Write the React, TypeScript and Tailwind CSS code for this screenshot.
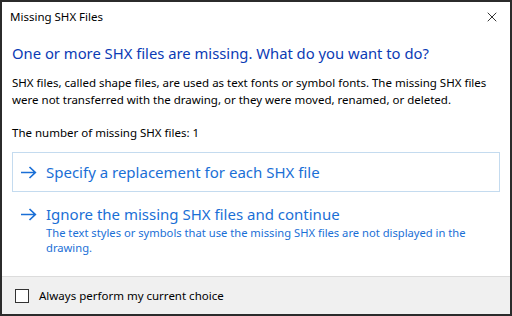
import { X } from "lucide-react";

const font = { fontFamily: '"Noto Sans", "Open Sans", sans-serif' };

function Arrow() {
  return (
    <svg width="17" height="13" viewBox="0 0 17 13" className="shrink-0">
      <path d="M1 6.5h14.5M9.5 1l5.8 5.5-5.8 5.5" fill="none" stroke="#1a6fd6" strokeWidth="1.7" />
    </svg>
  );
}

export default function App() {
  return (
    <div
      className="flex h-[316px] w-[512px] flex-col border-2 border-[#2b2b2b] bg-white text-[11.5px] text-black"
      style={font}
    >
      <div className="flex h-[30px] items-center justify-between pl-[8px] pr-[10px]">
        <span className="text-[11.5px] text-black">Missing SHX Files</span>
        <X size={16} strokeWidth={1.2} className="text-black" />
      </div>

      <div className="flex flex-1 flex-col px-[10px]">
        <h1 className="mt-[11px] text-[14.8px] leading-[20px] text-[#0b3bb5]">
          One or more SHX files are missing. What do you want to do?
        </h1>
        <p className="mt-[11px] leading-[17px]">
          SHX files, called shape files, are used as text fonts or symbol fonts. The missing SHX files
          were not transferred with the drawing, or they were moved, renamed, or deleted.
        </p>
        <p className="mt-[16px] leading-[17px]">The number of missing SHX files: 1</p>

        <div className="mt-[11px] flex h-[40px] items-center gap-[9px] border border-[#c4dbef] px-[7px] text-[15px] text-[#1a6fd6]">
          <Arrow />
          <span>Specify a replacement for each SHX file</span>
        </div>

        <div className="mt-[11px] flex gap-[9px] px-[8px] text-[#1a6fd6]">
          <div className="pt-[5px]">
            <Arrow />
          </div>
          <div className="flex flex-col">
            <span className="text-[15px] leading-[22px]">Ignore the missing SHX files and continue</span>
            <span className="text-[11.2px] leading-[15px]">
              The text styles or symbols that use the missing SHX files are not displayed in the
              drawing.
            </span>
          </div>
        </div>
      </div>

      <div className="flex h-[38px] items-center gap-[10px] border-t border-[#dcdcdc] bg-[#f0f0f0] px-[13px]">
        <span className="h-[14px] w-[14px] border border-[#333] bg-white" />
        <span>Always perform my current choice</span>
      </div>
    </div>
  );
}
